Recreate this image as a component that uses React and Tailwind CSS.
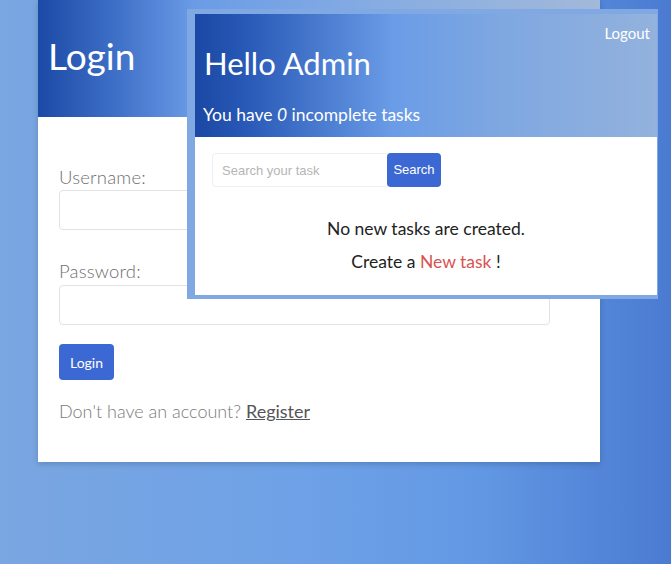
export default function App() {
  return (
    <div className="relative w-[671px] h-[564px] overflow-hidden bg-[linear-gradient(90deg,#7aa6e1_0%,#6ea1e7_45%,#6399e4_70%,#4a7bd1_100%)] font-['Lato',sans-serif]">
      {/* login card, behind */}
      <div className="ml-[38px] w-[562px] bg-white shadow-[0_2px_6px_rgba(0,0,0,0.18)]">
        <div className="h-[117px] pl-[10px] pt-[34px] bg-[linear-gradient(90deg,#1b4aa6_0%,#3f70c8_14%,#6a9ce6_28%,#86ace2_60%,#a2b9d9_100%)]">
          <h1 className="text-[37px] leading-[44px] text-white">Login</h1>
        </div>
        <div className="pl-[21px] pt-[48px] pb-[39px]">
          <label className="block text-[18.5px] leading-[24px] font-light tracking-[0.2px] text-[#6f6f6f]">Username:</label>
          <input className="mt-[1px] block w-[491px] h-[40px] rounded border border-[#e3e3e3] bg-white" />
          <label className="mt-[29px] block text-[18.5px] leading-[24px] font-light tracking-[0.2px] text-[#6f6f6f]">Password:</label>
          <input type="password" className="mt-[2px] block w-[491px] h-[40px] rounded border border-[#e3e3e3] bg-white" />
          <button className="mt-[19px] w-[55px] h-[36px] rounded bg-[#3c68d3] text-white text-[14px]">Login</button>
          <p className="mt-[19px] text-[18px] leading-[24px] font-light text-[#7a7a7a]">
            Don't have an account?{" "}
            <a className="underline text-[#555] font-normal">Register</a>
          </p>
        </div>
      </div>

      {/* dashboard screenshot laid over the login card */}
      <div className="absolute left-[187px] top-[9px] w-[471px] pt-[5px] pl-[8px] pr-[1px] pb-[4px] bg-[#80a9e4]">
        <div className="bg-white">
          <div className="h-[123px] px-[7px] bg-[linear-gradient(90deg,#1a48a4_0%,#2a5bb8_12%,#6a9ce7_43%,#7ea7e1_65%,#93b2dd_100%)]">
            <div className="pt-[9px] text-right text-[15px] leading-[20px] text-white">Logout</div>
            <h2 className="mt-[2px] pl-[2px] text-[31px] leading-[36px] text-white">Hello Admin</h2>
            <p className="mt-[22px] pl-[1px] text-[17.5px] leading-[24px] text-white">
              You have <i>0</i> incomplete tasks
            </p>
          </div>
          <div className="h-[158px] pt-[16px] text-center">
            <div className="flex pl-[17px]">
              <input
                placeholder="Search your task"
                className="w-[176px] h-[34px] pl-[9px] rounded-l border border-[#efefef] text-[13px] font-['Liberation_Sans',sans-serif] placeholder:text-[#b5b5b5]"
              />
              <button className="-ml-[1px] w-[54px] h-[34px] rounded bg-[#3c68d3] text-white text-[13px] font-['Liberation_Sans',sans-serif]">
                Search
              </button>
            </div>
            <p className="mt-[30px] text-[17.5px] leading-[24px] text-[#222]">No new tasks are created.</p>
            <p className="mt-[9px] text-[17.5px] leading-[24px] text-[#222]">
              Create a <span className="text-[#d9534f]">New task</span> !
            </p>
          </div>
        </div>
      </div>
    </div>
  );
}
